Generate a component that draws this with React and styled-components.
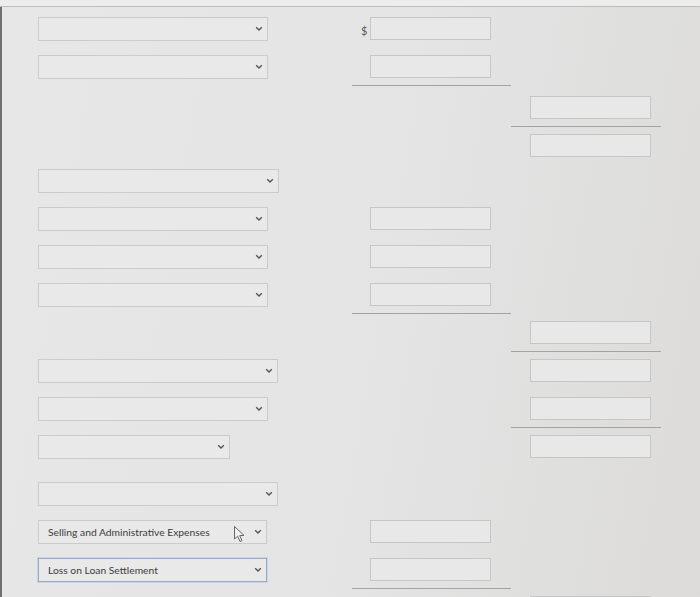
import React from "react";
import styled, { createGlobalStyle, css } from "styled-components";

const GlobalStyle = createGlobalStyle`
  html, body {
    margin: 0;
    padding: 0;
    background: #e2e2e2;
    overflow: hidden;
  }
  body {
    font-family: Lato, "Open Sans", sans-serif;
  }
`;

const rows = [
  { select: 230, amount: { dollar: true } },
  { select: 230, amount: { line: true } },
  { gap: 3, total: { line: true } },
  { total: {} },
  { gap: -3, select: 241 },
  { select: 230, amount: {} },
  { select: 230, amount: {} },
  { select: 230, amount: { line: true } },
  { total: { line: true } },
  { select: 240, total: {} },
  { select: 230, total: { line: true } },
  { select: 192, total: {} },
  { gap: 9, select: 240 },
  { select: 229, label: "Selling and Administrative Expenses", cursor: true, amount: {} },
  { select: 229, label: "Loss on Loan Settlement", focused: true, amount: { line: true } },
  { total: {} },
];

function Chevron() {
  return (
    <svg width="8" height="6" viewBox="0 0 8 6">
      <polyline points="1.2,1.2 4,4 6.8,1.2" fill="none" stroke="#555" strokeWidth="1.4" />
    </svg>
  );
}

function Pointer() {
  return (
    <svg width="14" height="18" viewBox="0 0 14 18">
      <path
        d="M1.5 1.5 L1.5 14 L4.6 11.2 L7 16.5 L9 15.6 L6.7 10.6 L11 10.4 Z"
        fill="#f0f0f0"
        stroke="#666"
        strokeWidth="1"
        strokeLinejoin="round"
      />
    </svg>
  );
}

export default function App() {
  return (
    <>
      <GlobalStyle />
      <TopStrip />
      <Sheet>
        {rows.map((row, i) => (
          <Row key={i} $gap={row.gap || 0}>
            <SelectCell>
              {row.select && (
                <SelectBox $width={row.select} $focused={row.focused}>
                  <SelectText>{row.label || ""}</SelectText>
                  <Chevron />
                  {row.cursor && (
                    <CursorMark>
                      <Pointer />
                    </CursorMark>
                  )}
                </SelectBox>
              )}
            </SelectCell>
            <AmountCell $line={row.amount && row.amount.line}>
              {row.amount && (
                <>
                  <Dollar>{row.amount.dollar ? "$" : ""}</Dollar>
                  <InputBox />
                </>
              )}
            </AmountCell>
            <TotalCell $line={row.total && row.total.line}>
              {row.total && (
                <>
                  <span />
                  <InputBox />
                </>
              )}
            </TotalCell>
          </Row>
        ))}
      </Sheet>
    </>
  );
}

const TopStrip = styled.div`
  height: 6px;
  background: #ededed;
  border-bottom: 1px solid #bdbdbd;
`;

const Sheet = styled.div`
  height: 590px;
  overflow: hidden;
  border-left: 2px solid #707070;
  padding: 3px 0 0 36px;
  box-sizing: border-box;
  background: linear-gradient(100deg, #e7e7e7 0%, #e4e4e4 55%, #dcdbda 100%);
`;

const Row = styled.div`
  display: grid;
  grid-template-columns: 314px 159px 150px;
  height: 38px;
  margin-top: ${(p) => p.$gap}px;
`;

const SelectCell = styled.div`
  padding-top: 7px;
`;

const SelectBox = styled.div`
  position: relative;
  box-sizing: border-box;
  width: ${(p) => p.$width}px;
  height: 24px;
  display: flex;
  align-items: center;
  justify-content: space-between;
  padding: 0 4px 0 9px;
  background: #e9e9e9;
  border: 1px solid #cbcbcb;
  ${(p) =>
    p.$focused &&
    css`
      border-color: #98aac4;
      box-shadow: 0 0 0 1px #cad4e3;
    `}
`;

const SelectText = styled.span`
  font-size: 10.3px;
  color: #3c3c3c;
  white-space: nowrap;
`;

const CursorMark = styled.div`
  position: absolute;
  left: 194px;
  top: 4px;
  line-height: 0;
`;

const columnCell = css`
  box-sizing: border-box;
  height: 38px;
  padding-top: 7px;
  display: grid;
  align-items: start;
  ${(p) =>
    p.$line &&
    css`
      border-bottom: 1px solid #a3a3a3;
    `}
`;

const AmountCell = styled.div`
  ${columnCell};
  grid-template-columns: 18px 121px;
`;

const TotalCell = styled.div`
  ${columnCell};
  grid-template-columns: 19px 121px;
`;

const Dollar = styled.span`
  font-size: 11px;
  color: #5a5a5a;
  padding-left: 9px;
  line-height: 27px;
`;

const InputBox = styled.div`
  box-sizing: border-box;
  height: 23px;
  background: #e8e8e8;
  border: 1px solid #c6c6c6;
`;
